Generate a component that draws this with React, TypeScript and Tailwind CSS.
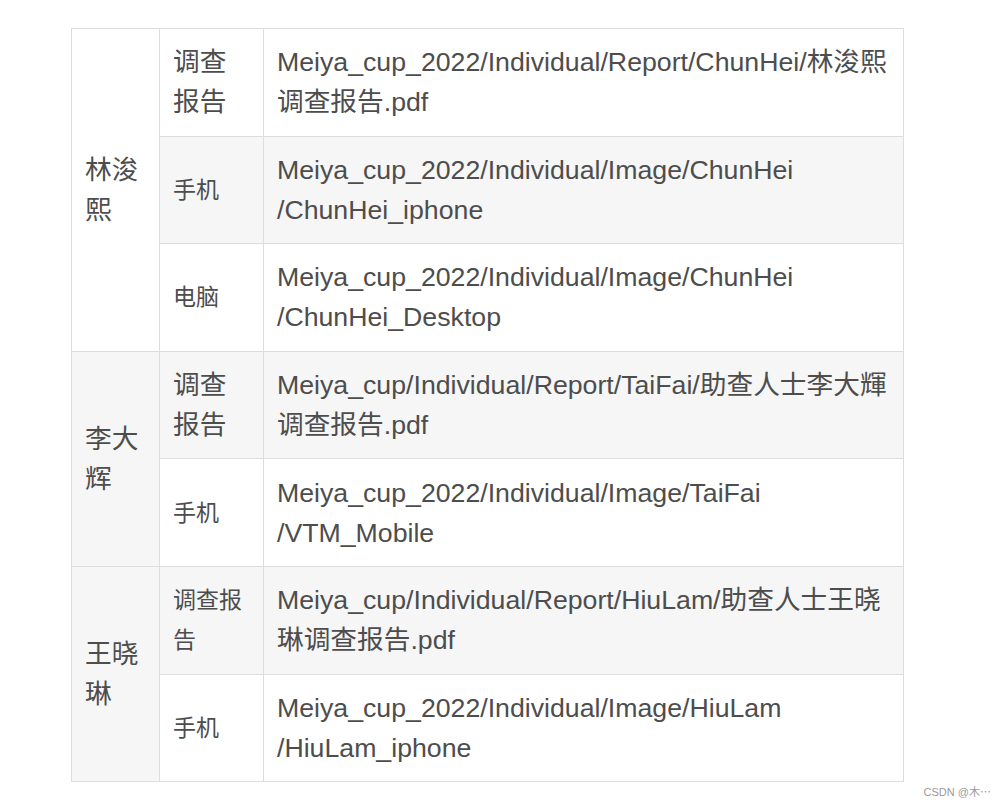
import React from "react";

const font = { fontFamily: '"Liberation Sans", Arial, "Noto Sans CJK SC", sans-serif' };

type Row = { name?: string; span?: number; type: string; small?: boolean; path: string };

const rows: Row[] = [
  { name: "林浚熙", span: 3, type: "调查报告", path: "Meiya_cup_2022/Individual/Report/ChunHei/林浚熙调查报告.pdf" },
  { type: "手机", small: true, path: "Meiya_cup_2022/Individual/Image/ChunHei /ChunHei_iphone" },
  { type: "电脑", small: true, path: "Meiya_cup_2022/Individual/Image/ChunHei /ChunHei_Desktop" },
  { name: "李大辉", span: 2, type: "调查报告", path: "Meiya_cup/Individual/Report/TaiFai/助查人士李大輝调查报告.pdf" },
  { type: "手机", small: true, path: "Meiya_cup_2022/Individual/Image/TaiFai /VTM_Mobile" },
  { name: "王晓琳", span: 2, type: "调查报告", small: true, path: "Meiya_cup/Individual/Report/HiuLam/助查人士王晓琳调查报告.pdf" },
  { type: "手机", small: true, path: "Meiya_cup_2022/Individual/Image/HiuLam /HiuLam_iphone" },
];

export default function App() {
  return (
    <div className="relative h-[808px] w-[1007px] bg-white text-[#4d4d4d]" style={font}>
      <div className="pl-[71px] pt-[28px]">
        <table className="w-[833px] table-fixed border-collapse border border-[#dddddd]">
          <colgroup>
            <col className="w-[88px]" />
            <col className="w-[104px]" />
            <col />
          </colgroup>
          <tbody>
            {rows.map((r, i) => (
              <tr key={i} className={i % 2 === 1 ? "bg-[#f6f6f6]" : "bg-white"}>
                {r.name && (
                  <td
                    rowSpan={r.span}
                    className="border border-[#dddddd] px-[13px] py-[13px] align-middle text-[26.7px] leading-[40px]"
                  >
                    {r.name}
                  </td>
                )}
                <td
                  className={
                    "border border-[#dddddd] px-[13px] py-[13.3px] align-middle leading-[40px] " +
                    (r.small ? "text-[23px]" : "text-[26.7px]")
                  }
                >
                  {r.type}
                </td>
                <td className="border border-[#dddddd] py-[13.3px] pl-[13px] pr-[10px] align-middle text-[26.7px] leading-[40px]">
                  {r.path}
                </td>
              </tr>
            ))}
          </tbody>
        </table>
      </div>
      <div className="absolute right-[16px] bottom-[9px] text-[11px] leading-[14px] text-[#999999]">
        CSDN @木⋯
      </div>
    </div>
  );
}
